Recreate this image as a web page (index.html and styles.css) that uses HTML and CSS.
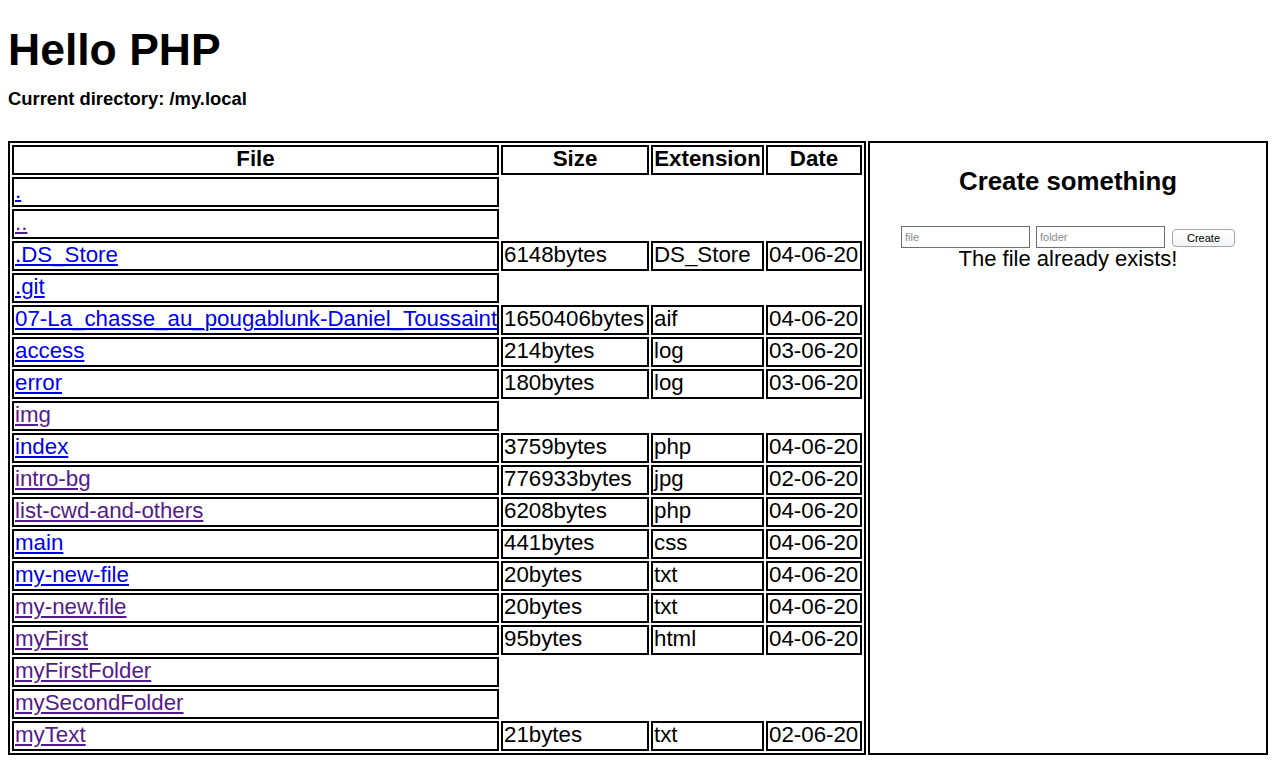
FILE: index.html
```html
<!DOCTYPE html>
<html lang="en">
<head>
<meta charset="utf-8">
<title>Hello PHP</title>
<link rel="stylesheet" href="styles.css">
</head>
<body>
<h1 class="title">Hello PHP</h1>
<h5 class="cwd">Current directory: /my.local</h5>
<div class="layout">
  <table class="files">
    <thead>
      <tr>
        <th class="c-file">File</th>
        <th class="c-size">Size</th>
        <th class="c-ext">Extension</th>
        <th class="c-date">Date</th>
      </tr>
    </thead>
    <tbody>
      <tr><td><a href="#" class="lk">.</a></td></tr>
      <tr><td><a href="#" class="lk vis">..</a></td></tr>
      <tr><td><a href="#" class="lk">.DS_Store</a></td><td>6148bytes</td><td>DS_Store</td><td>04-06-20</td></tr>
      <tr><td><a href="#" class="lk">.git</a></td></tr>
      <tr><td><a href="#" class="lk">07-La_chasse_au_pougablunk-Daniel_Toussaint</a></td><td>1650406bytes</td><td>aif</td><td>04-06-20</td></tr>
      <tr><td><a href="#" class="lk">access</a></td><td>214bytes</td><td>log</td><td>03-06-20</td></tr>
      <tr><td><a href="#" class="lk">error</a></td><td>180bytes</td><td>log</td><td>03-06-20</td></tr>
      <tr><td><a href="#" class="lk vis">img</a></td></tr>
      <tr><td><a href="#" class="lk">index</a></td><td>3759bytes</td><td>php</td><td>04-06-20</td></tr>
      <tr><td><a href="#" class="lk vis">intro-bg</a></td><td>776933bytes</td><td>jpg</td><td>02-06-20</td></tr>
      <tr><td><a href="#" class="lk vis">list-cwd-and-others</a></td><td>6208bytes</td><td>php</td><td>04-06-20</td></tr>
      <tr><td><a href="#" class="lk">main</a></td><td>441bytes</td><td>css</td><td>04-06-20</td></tr>
      <tr><td><a href="#" class="lk">my-new-file</a></td><td>20bytes</td><td>txt</td><td>04-06-20</td></tr>
      <tr><td><a href="#" class="lk vis">my-new.file</a></td><td>20bytes</td><td>txt</td><td>04-06-20</td></tr>
      <tr><td><a href="#" class="lk vis">myFirst</a></td><td>95bytes</td><td>html</td><td>04-06-20</td></tr>
      <tr><td><a href="#" class="lk vis">myFirstFolder</a></td></tr>
      <tr><td><a href="#" class="lk vis">mySecondFolder</a></td></tr>
      <tr><td><a href="#" class="lk vis">myText</a></td><td>21bytes</td><td>txt</td><td>02-06-20</td></tr>
    </tbody>
  </table>
  <div class="panel">
    <h3 class="panel-title">Create something</h3>
    <form class="create-form" action="#">
      <input class="field" type="text" placeholder="file">
      <input class="field" type="text" placeholder="folder">
      <button class="btn" type="button">Create</button>
    </form>
    <p class="message">The file already exists!</p>
  </div>
</div>
</body>
</html>
```
FILE: styles.css
```css
html, body {
  margin: 0;
  padding: 0;
}
body {
  padding: 8px;
  font-family: "Liberation Sans", Arial, Helvetica, sans-serif;
  font-size: 22px;
  color: #000;
  background: #fff;
}
.title {
  font-size: 44.5px;
  font-weight: bold;
  line-height: 44px;
  margin: 20px 0 0;
}
.cwd {
  font-size: 18.4px;
  font-weight: bold;
  line-height: 20px;
  margin: 17px 0 0;
}
.layout {
  display: flex;
  gap: 2px;
  margin-top: 32px;
  align-items: stretch;
}
.files {
  width: 858px;
  flex: 0 0 858px;
  table-layout: fixed;
  border: 2px solid #000;
  border-spacing: 2px;
  border-collapse: separate;
}
.files th,
.files td {
  border: 2px solid #000;
  padding: 0 1px 2px;
  font-size: 22.3px;
  line-height: 24px;
  white-space: nowrap;
  text-align: left;
  box-sizing: border-box;
}
.files th {
  font-weight: bold;
  text-align: center;
}
.c-file { width: 487px; }
.c-size { width: 148px; }
.c-ext { width: 113px; }
.c-date { width: 96px; }
.lk {
  color: #0000ee;
  text-decoration: underline;
}
.lk.vis {
  color: #551a8b;
}
.panel {
  box-sizing: border-box;
  width: 400px;
  flex: 0 0 400px;
  border: 2px solid #000;
  text-align: center;
}
.panel-title {
  font-size: 25.8px;
  font-weight: bold;
  line-height: 30px;
  margin: 23px 0 0;
}
.create-form {
  display: flex;
  justify-content: center;
  align-items: flex-start;
  margin: 30px 0 0;
  height: 22px;
}
.field {
  box-sizing: border-box;
  width: 129px;
  height: 22px;
  border: 1px solid #6e6e6e;
  padding: 1px 3px;
  font-family: "Liberation Sans", Arial, sans-serif;
  font-size: 11px;
  margin: 0 3px 0 0;
  background: #fff;
}
.field + .field {
  margin-left: 3px;
  margin-right: 7px;
}
.field::placeholder {
  color: #8a8a8a;
}
.btn {
  box-sizing: border-box;
  width: 63px;
  height: 18px;
  border: 1px solid #a6a6a6;
  border-radius: 4px;
  background: linear-gradient(#ffffff, #f4f4f4);
  font-family: "Liberation Sans", Arial, sans-serif;
  font-size: 11px;
  line-height: 14px;
  padding: 0;
  color: #000;
  margin-top: 3px;
}
.message {
  margin: 0;
  font-size: 22px;
  line-height: 21px;
}
```
